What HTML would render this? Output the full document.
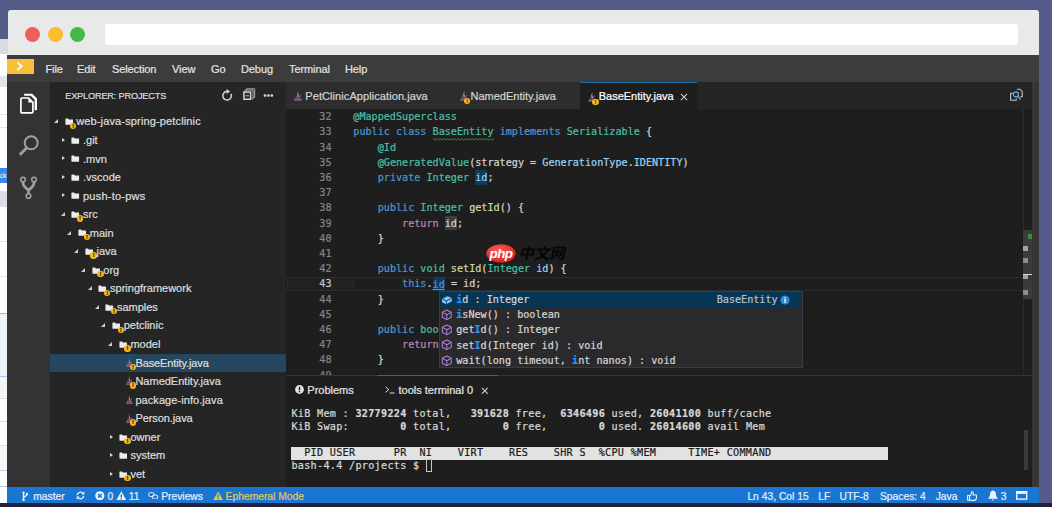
<!DOCTYPE html>
<html lang="en">
<head>
<meta charset="utf-8">
<title>Theia IDE - BaseEntity.java</title>
<style>
*{box-sizing:border-box;margin:0;padding:0}
html,body{width:1052px;height:507px;overflow:hidden}
body{position:relative;-webkit-text-stroke:0.22px;background:#545b88;font-family:"Liberation Sans","Noto Sans CJK SC",sans-serif;font-size:11px;color:#d8d8d8}
.abs{position:absolute}
/* left strip of another window */
#strip{left:0;top:0;width:8px;height:507px;overflow:hidden}
#strip div{position:absolute;left:0;width:8px}
/* window */
#win{left:7px;top:10px;width:1032px;height:493px;overflow:hidden}
#title{left:1.3px;top:0;width:1030.7px;border-radius:3px 3px 0 0;height:45px;background:#e8e9e9}
.tl{position:absolute;top:16.9px;width:15px;height:15px;border-radius:50%}
#addr{left:97.2px;top:14.2px;width:912.5px;height:20.6px;background:#fff;border-radius:3px}
#menu{left:0;top:45px;width:1032px;height:27px;background:#3c3c3c}
#menu span{position:absolute;top:8px;font-size:11px;color:#e2e2e2;letter-spacing:-0.1px}
#ybox{left:0;top:49.4px;width:27px;height:14.6px;background:#f9bf3b}
#act{left:0;top:72px;width:43px;height:405px;background:#333333}
#side{left:43px;top:72px;width:236px;height:405px;background:#252526;overflow:hidden}
#shead{position:absolute;left:15.2px;top:8.6px;font-size:9.2px;color:#dadada;letter-spacing:-0.18px}
.row{position:absolute;left:0;width:236px;height:18.55px;line-height:18.55px;font-size:11px;color:#dedede;white-space:nowrap}
.row.sel{background:#24465f}
.row>*{position:absolute;top:0}
.acl{top:6.9px!important;border-left:3.8px solid #d4d4d4;border-top:2.9px solid transparent;border-bottom:2.9px solid transparent}
.aop{top:6.9px!important;border-bottom:4.3px solid #d0d0d0;border-left:4.2px solid transparent}
.ic{width:11px;height:18.55px}
.fi{position:absolute;left:0;top:5.8px;width:8.5px;height:7.2px}
.ji{position:absolute;left:0;top:4.4px;width:6.8px;height:9.2px}
.wd{top:10.2px!important;width:6.4px;height:6.4px;border-radius:50%;background:#f5b820;color:#3a2400;font-size:5.8px;line-height:6.4px;text-align:center;font-weight:bold}
/* editor */
#tabs{left:279px;top:72px;width:746px;height:27px;background:#252526}
.tab{position:absolute;top:0;height:27px;background:#2d2d2d;font-size:11px;line-height:27px;color:#d4d4d4;white-space:nowrap}
.tab .tt{position:absolute;top:0.7px}
.wd2{position:absolute;top:15.6px;width:6.4px;height:6.4px;border-radius:50%;background:#f5b820;color:#6a4008;font-size:5.5px;line-height:6.4px;text-align:center;font-weight:bold}
.tab.act{background:#1e1e1e;border-top:1px solid #1b6fa8;line-height:25px;color:#fff}
#ed{left:279px;top:99px;width:746px;height:266px;background:#1e1e1e;overflow:hidden;font-family:"DejaVu Sans Mono","Liberation Mono",monospace;font-size:10.15px}
.ln{position:absolute;left:0;width:45.5px;text-align:right;height:15.17px;line-height:15.17px;color:#858585}
.ln.cur{color:#c6c6c6}
.cl{position:absolute;left:67.3px;height:15.17px;line-height:15.17px;white-space:pre;color:#d4d4d4}
.k{color:#5194cd}.t{color:#4abea6}.v{color:#96d2f4}.f{color:#d6d6a6}.c{color:#bf83ba}
.hl{background:#0e3a5c;padding:1.6px 0}.hl2{background:#3a3d41;padding:1.6px 0}
.u{text-decoration:underline;text-decoration-color:#4f94d0;text-decoration-thickness:0.8px;text-underline-offset:1.5px;color:#4f94d0!important}
.sq{}
/* right strip */
#rstrip{left:1025px;top:72px;width:7px;height:405px;background:#363636}
/* panel */
#panel{left:279px;top:365px;width:746px;height:112px;background:#1e1e1e;overflow:hidden}
#term{position:absolute;left:5.4px;top:33.3px;font-family:"DejaVu Sans Mono","Liberation Mono",monospace;font-size:10.15px;letter-spacing:0.305px;line-height:12.85px;white-space:pre;color:#d8d8d8}
#term .hd{display:inline-block;width:597px;background:#e2e2e2;color:#1c1c1c;height:12.4px;line-height:12.4px;vertical-align:top;margin-top:0.3px}
#term .cur{display:inline-block;width:6.2px;height:12.2px;border:1px solid #c8c8c8;vertical-align:top;margin-top:-0.2px}
/* popup */
#pop{left:432.2px;top:281.4px;width:363.6px;height:76.6px;background:#2a2a2d;border:0.8px solid #3c3c3e;font-family:"DejaVu Sans Mono","Liberation Mono",monospace;font-size:10.15px;color:#d4d4d4;overflow:hidden}
.pr{position:absolute;left:0;width:363px;height:15.17px;line-height:15.17px;white-space:pre}
.pr.s{background:#073655}
.pr span.tx{position:absolute;left:16px;top:-0.4px}
.pr b{color:#1a9cff;font-weight:bold}
.pr svg{position:absolute;left:0.8px;top:1.5px;width:11.6px;height:11.6px}
/* panel tabs */
#ptabs{position:absolute;left:0;top:0;width:746px;height:27px;border-top:1px solid #333;font-size:11px;color:#e4e4e4}
#ptabs span{position:absolute;top:7.7px;white-space:nowrap}
/* watermark */
#wm{left:478.5px;top:234px;width:90px;height:19px}
/* status */
#status{left:0;top:477px;width:1032px;height:16px;background:#1976d2;font-size:10.3px;line-height:16px;color:#e6eefa}
#status span{position:absolute;top:2.1px;white-space:nowrap}
#bot{left:0;top:503px;width:1052px;height:4px;background:#20233a}
</style>
</head>
<body>
<div id="strip" class="abs">
<div style="top:0;height:39px;background:#545b88"></div>
<div style="top:39px;height:15px;background:#d9dbe1"></div>
<div style="top:54px;height:22px;background:#fff"></div>
<div style="top:76px;height:11px;background:#e4e5ea"></div>
<div style="top:87px;height:420px;background:#fff"></div>
<div style="top:114px;height:1px;background:#e4e4e8"></div>
<div style="top:127px;height:1px;background:#e4e4e8"></div>
<div style="top:168px;height:14.6px;background:#3d8ae6;color:#fff;font-size:6.5px;line-height:15px;text-indent:-3.6px;-webkit-text-stroke:0">ack</div>
<div style="top:191px;height:16px;background:#dddee3"></div>
<div style="top:241px;height:1px;background:#e4e4e8"></div>
<div style="top:276px;height:1px;background:#e4e4e8"></div>
<div style="top:313px;height:63px;background:#eef3fb"></div>
<div style="top:312.5px;height:1px;background:#8ab8ea"></div>
<div style="top:376px;height:1px;background:#a8c8ee"></div>
<div style="top:377px;height:21px;background:#f5f5f7"></div>
<div style="top:398px;height:1px;background:#d8e0ee"></div>
<div style="top:421px;height:1px;background:#dcdce2"></div>
<div style="top:445px;height:1px;background:#dcdce2"></div>
<div style="top:446px;height:24px;background:#f7f7f9"></div>
<div style="top:470px;height:1px;background:#b8d0ee"></div>
<div style="top:485.5px;height:1px;background:#a8c8ee"></div>
</div>
<div id="win" class="abs">
 <div id="title" class="abs">
  <div class="tl" style="left:16.9px;background:#ee5f5b"></div>
  <div class="tl" style="left:39.5px;background:#fbbc2e"></div>
  <div class="tl" style="left:61.9px;background:#45b948"></div>
  <div id="addr" class="abs"></div>
 </div>
 <div id="menu" class="abs">
  <span style="left:38.5px">File</span><span style="left:70px">Edit</span><span style="left:105px">Selection</span><span style="left:165px">View</span><span style="left:204px">Go</span><span style="left:234px">Debug</span><span style="left:282px">Terminal</span><span style="left:338px">Help</span>
 </div>
 <div id="ybox" class="abs"><svg width="26.5" height="15" viewBox="0 0 26.5 15" style="display:block"><path d="M10.4 3.4L14.6 7.2L10.4 11" fill="none" stroke="#fff" stroke-width="1.9"/></svg></div>
 <div id="act" class="abs">
  <svg class="abs" style="left:12px;top:11px" width="20" height="22" viewBox="0 0 20 22"><path d="M5.2 0.7H13.2L18 5.5V16.4Q18 17.2 17.2 17.2H15.6V6.6L11.6 2.8H5.2Q4.9 1.4 5.2 0.7Z" fill="#fff"/><path d="M3 5H9.6L13.9 9.3V18.8Q13.9 19.9 12.8 19.9H3Q1.9 19.9 1.9 18.8V6.1Q1.9 5 3 5Z" fill="#333" stroke="#fff" stroke-width="1.7"/><path d="M9.3 5.2V9.6H13.7Z" fill="#fff"/></svg>
  <svg class="abs" style="left:11px;top:52.6px" width="22" height="22" viewBox="0 0 22 22"><circle cx="13.2" cy="7.8" r="6.5" fill="none" stroke="#a0a0a0" stroke-width="2"/><path d="M9.4 12.2L1.8 19.8" stroke="#a0a0a0" stroke-width="2.9" fill="none"/></svg>
  <svg class="abs" style="left:12px;top:93.8px" width="20" height="25" viewBox="0 0 20 25"><g fill="none" stroke="#a0a0a0" stroke-width="1.6"><circle cx="4" cy="3.6" r="2.3"/><circle cx="15" cy="3.6" r="2.3"/><circle cx="9.5" cy="20" r="2.3"/><path d="M4 6V7Q4 9.4 6.4 11.4L9.5 14.2V17.6M15 6V7Q15 9.4 12.6 11.4L9.5 14.2" stroke-width="2.7"/></g></svg>
 </div>
 <div id="side" class="abs">
  <div id="shead">EXPLORER: PROJECTS</div>
  <svg class="abs" style="left:169px;top:6px" width="60" height="15" viewBox="0 0 60 15"><path d="M12 5.9A4.3 4.3 0 1 1 8 3.4" fill="none" stroke="#cfcfcf" stroke-width="1.6"/><path d="M7.6 0.9L11.2 3.4L7.6 5.9Z" fill="#cfcfcf"/><g fill="none" stroke="#bdbdbd" stroke-width="0.9"><path d="M27.6 2.1V0.8H35.7V9.4H34.4"/><path d="M25.9 3.4V2.1H34V10.7H32.7"/></g><rect x="24.9" y="4.1" width="6.7" height="7.2" fill="#252526" stroke="#d2d2d2" stroke-width="1.5"/><rect x="26.4" y="6.9" width="3.7" height="1.5" fill="#4aa0ea"/><g fill="#d4d4d4"><rect x="44.7" y="6.2" width="2.6" height="2.6" rx="0.8"/><rect x="48.1" y="6.2" width="2.6" height="2.6" rx="0.8"/><rect x="51.5" y="6.2" width="2.6" height="2.6" rx="0.8"/></g></svg>
<div class="row" style="top:30.40px"><i class="aop" style="left:3.90px"></i><span class="ic" style="left:14.50px"><svg class="fi" viewBox="0 0 12 10"><path d="M0.6 1.2Q0.6 0.6 1.2 0.6H4.2L5.4 1.9H10.8Q11.4 1.9 11.4 2.5V8.8Q11.4 9.4 10.8 9.4H1.2Q0.6 9.4 0.6 8.8Z" fill="#ececec"/></svg></span><span class="wd" style="left:20.10px">!</span><span class="lb" style="left:26.20px;letter-spacing:0.144px">web-java-spring-petclinic</span></div>
<div class="row" style="top:48.95px"><i class="acl" style="left:12.48px"></i><span class="ic" style="left:21.28px"><svg class="fi" viewBox="0 0 12 10"><path d="M0.6 1.2Q0.6 0.6 1.2 0.6H4.2L5.4 1.9H10.8Q11.4 1.9 11.4 2.5V8.8Q11.4 9.4 10.8 9.4H1.2Q0.6 9.4 0.6 8.8Z" fill="#ececec"/></svg></span><span class="lb" style="left:32.98px">.git</span></div>
<div class="row" style="top:67.50px"><i class="acl" style="left:12.48px"></i><span class="ic" style="left:21.28px"><svg class="fi" viewBox="0 0 12 10"><path d="M0.6 1.2Q0.6 0.6 1.2 0.6H4.2L5.4 1.9H10.8Q11.4 1.9 11.4 2.5V8.8Q11.4 9.4 10.8 9.4H1.2Q0.6 9.4 0.6 8.8Z" fill="#ececec"/></svg></span><span class="lb" style="left:32.98px">.mvn</span></div>
<div class="row" style="top:86.05px"><i class="acl" style="left:12.48px"></i><span class="ic" style="left:21.28px"><svg class="fi" viewBox="0 0 12 10"><path d="M0.6 1.2Q0.6 0.6 1.2 0.6H4.2L5.4 1.9H10.8Q11.4 1.9 11.4 2.5V8.8Q11.4 9.4 10.8 9.4H1.2Q0.6 9.4 0.6 8.8Z" fill="#ececec"/></svg></span><span class="lb" style="left:32.98px">.vscode</span></div>
<div class="row" style="top:104.60px"><i class="acl" style="left:12.48px"></i><span class="ic" style="left:21.28px"><svg class="fi" viewBox="0 0 12 10"><path d="M0.6 1.2Q0.6 0.6 1.2 0.6H4.2L5.4 1.9H10.8Q11.4 1.9 11.4 2.5V8.8Q11.4 9.4 10.8 9.4H1.2Q0.6 9.4 0.6 8.8Z" fill="#ececec"/></svg></span><span class="lb" style="left:32.98px;letter-spacing:0.24px">push-to-pws</span></div>
<div class="row" style="top:123.15px"><i class="aop" style="left:10.68px"></i><span class="ic" style="left:21.28px"><svg class="fi" viewBox="0 0 12 10"><path d="M0.6 1.2Q0.6 0.6 1.2 0.6H4.2L5.4 1.9H10.8Q11.4 1.9 11.4 2.5V8.8Q11.4 9.4 10.8 9.4H1.2Q0.6 9.4 0.6 8.8Z" fill="#ececec"/></svg></span><span class="wd" style="left:26.88px">!</span><span class="lb" style="left:32.98px">src</span></div>
<div class="row" style="top:141.70px"><i class="aop" style="left:17.46px"></i><span class="ic" style="left:28.06px"><svg class="fi" viewBox="0 0 12 10"><path d="M0.6 1.2Q0.6 0.6 1.2 0.6H4.2L5.4 1.9H10.8Q11.4 1.9 11.4 2.5V8.8Q11.4 9.4 10.8 9.4H1.2Q0.6 9.4 0.6 8.8Z" fill="#ececec"/></svg></span><span class="wd" style="left:33.66px">!</span><span class="lb" style="left:39.76px">main</span></div>
<div class="row" style="top:160.25px"><i class="aop" style="left:24.24px"></i><span class="ic" style="left:34.84px"><svg class="fi" viewBox="0 0 12 10"><path d="M0.6 1.2Q0.6 0.6 1.2 0.6H4.2L5.4 1.9H10.8Q11.4 1.9 11.4 2.5V8.8Q11.4 9.4 10.8 9.4H1.2Q0.6 9.4 0.6 8.8Z" fill="#ececec"/></svg></span><span class="wd" style="left:40.44px">!</span><span class="lb" style="left:46.54px">java</span></div>
<div class="row" style="top:178.80px"><i class="aop" style="left:31.02px"></i><span class="ic" style="left:41.62px"><svg class="fi" viewBox="0 0 12 10"><path d="M0.6 1.2Q0.6 0.6 1.2 0.6H4.2L5.4 1.9H10.8Q11.4 1.9 11.4 2.5V8.8Q11.4 9.4 10.8 9.4H1.2Q0.6 9.4 0.6 8.8Z" fill="#ececec"/></svg></span><span class="wd" style="left:47.22px">!</span><span class="lb" style="left:53.32px">org</span></div>
<div class="row" style="top:197.35px"><i class="aop" style="left:37.80px"></i><span class="ic" style="left:48.40px"><svg class="fi" viewBox="0 0 12 10"><path d="M0.6 1.2Q0.6 0.6 1.2 0.6H4.2L5.4 1.9H10.8Q11.4 1.9 11.4 2.5V8.8Q11.4 9.4 10.8 9.4H1.2Q0.6 9.4 0.6 8.8Z" fill="#ececec"/></svg></span><span class="wd" style="left:54.00px">!</span><span class="lb" style="left:60.10px">springframework</span></div>
<div class="row" style="top:215.90px"><i class="aop" style="left:44.58px"></i><span class="ic" style="left:55.18px"><svg class="fi" viewBox="0 0 12 10"><path d="M0.6 1.2Q0.6 0.6 1.2 0.6H4.2L5.4 1.9H10.8Q11.4 1.9 11.4 2.5V8.8Q11.4 9.4 10.8 9.4H1.2Q0.6 9.4 0.6 8.8Z" fill="#ececec"/></svg></span><span class="wd" style="left:60.78px">!</span><span class="lb" style="left:66.88px">samples</span></div>
<div class="row" style="top:234.45px"><i class="aop" style="left:51.36px"></i><span class="ic" style="left:61.96px"><svg class="fi" viewBox="0 0 12 10"><path d="M0.6 1.2Q0.6 0.6 1.2 0.6H4.2L5.4 1.9H10.8Q11.4 1.9 11.4 2.5V8.8Q11.4 9.4 10.8 9.4H1.2Q0.6 9.4 0.6 8.8Z" fill="#ececec"/></svg></span><span class="wd" style="left:67.56px">!</span><span class="lb" style="left:73.66px">petclinic</span></div>
<div class="row" style="top:253.00px"><i class="aop" style="left:58.14px"></i><span class="ic" style="left:68.74px"><svg class="fi" viewBox="0 0 12 10"><path d="M0.6 1.2Q0.6 0.6 1.2 0.6H4.2L5.4 1.9H10.8Q11.4 1.9 11.4 2.5V8.8Q11.4 9.4 10.8 9.4H1.2Q0.6 9.4 0.6 8.8Z" fill="#ececec"/></svg></span><span class="wd" style="left:74.34px">!</span><span class="lb" style="left:80.44px">model</span></div>
<div class="row sel" style="top:271.55px"><span class="ic" style="left:75.92px"><svg class="ji" viewBox="0 0 7 9"><path d="M3.9 0C4.7 1.3 3.4 2 3.9 3.1C4.3 3.9 5.1 4.4 4.5 5.7H2.9C3.3 4.9 2.5 4.3 2.6 3.2C2.7 2 3.8 1.4 3.9 0ZM5.5 2.6C6.1 3.6 5.5 4.4 5.6 5.7H4.9C5 4.4 5.3 3.8 5.5 2.6ZM1.6 4.2C1.4 4.8 1.9 5.2 1.9 5.7H2.5C2.3 5.1 1.9 4.8 1.6 4.2ZM1 6.1H6V7H1ZM0.2 7.6H6.8V8.8H0.2Z" fill="#a870a2"/></svg></span><span class="wd" style="left:79.72px">!</span><span class="lb" style="left:85.42px;letter-spacing:-0.11px">BaseEntity.java</span></div>
<div class="row" style="top:290.10px"><span class="ic" style="left:75.92px"><svg class="ji" viewBox="0 0 7 9"><path d="M3.9 0C4.7 1.3 3.4 2 3.9 3.1C4.3 3.9 5.1 4.4 4.5 5.7H2.9C3.3 4.9 2.5 4.3 2.6 3.2C2.7 2 3.8 1.4 3.9 0ZM5.5 2.6C6.1 3.6 5.5 4.4 5.6 5.7H4.9C5 4.4 5.3 3.8 5.5 2.6ZM1.6 4.2C1.4 4.8 1.9 5.2 1.9 5.7H2.5C2.3 5.1 1.9 4.8 1.6 4.2ZM1 6.1H6V7H1ZM0.2 7.6H6.8V8.8H0.2Z" fill="#a870a2"/></svg></span><span class="wd" style="left:79.72px">!</span><span class="lb" style="left:85.42px">NamedEntity.java</span></div>
<div class="row" style="top:308.65px"><span class="ic" style="left:75.92px"><svg class="ji" viewBox="0 0 7 9"><path d="M3.9 0C4.7 1.3 3.4 2 3.9 3.1C4.3 3.9 5.1 4.4 4.5 5.7H2.9C3.3 4.9 2.5 4.3 2.6 3.2C2.7 2 3.8 1.4 3.9 0ZM5.5 2.6C6.1 3.6 5.5 4.4 5.6 5.7H4.9C5 4.4 5.3 3.8 5.5 2.6ZM1.6 4.2C1.4 4.8 1.9 5.2 1.9 5.7H2.5C2.3 5.1 1.9 4.8 1.6 4.2ZM1 6.1H6V7H1ZM0.2 7.6H6.8V8.8H0.2Z" fill="#a870a2"/></svg></span><span class="lb" style="left:85.42px;letter-spacing:0.07px">package-info.java</span></div>
<div class="row" style="top:327.20px"><span class="ic" style="left:75.92px"><svg class="ji" viewBox="0 0 7 9"><path d="M3.9 0C4.7 1.3 3.4 2 3.9 3.1C4.3 3.9 5.1 4.4 4.5 5.7H2.9C3.3 4.9 2.5 4.3 2.6 3.2C2.7 2 3.8 1.4 3.9 0ZM5.5 2.6C6.1 3.6 5.5 4.4 5.6 5.7H4.9C5 4.4 5.3 3.8 5.5 2.6ZM1.6 4.2C1.4 4.8 1.9 5.2 1.9 5.7H2.5C2.3 5.1 1.9 4.8 1.6 4.2ZM1 6.1H6V7H1ZM0.2 7.6H6.8V8.8H0.2Z" fill="#a870a2"/></svg></span><span class="wd" style="left:79.72px">!</span><span class="lb" style="left:85.42px;letter-spacing:-0.08px">Person.java</span></div>
<div class="row" style="top:345.75px"><i class="acl" style="left:59.94px"></i><span class="ic" style="left:68.74px"><svg class="fi" viewBox="0 0 12 10"><path d="M0.6 1.2Q0.6 0.6 1.2 0.6H4.2L5.4 1.9H10.8Q11.4 1.9 11.4 2.5V8.8Q11.4 9.4 10.8 9.4H1.2Q0.6 9.4 0.6 8.8Z" fill="#ececec"/></svg></span><span class="wd" style="left:74.34px">!</span><span class="lb" style="left:80.44px">owner</span></div>
<div class="row" style="top:364.30px"><i class="acl" style="left:59.94px"></i><span class="ic" style="left:68.74px"><svg class="fi" viewBox="0 0 12 10"><path d="M0.6 1.2Q0.6 0.6 1.2 0.6H4.2L5.4 1.9H10.8Q11.4 1.9 11.4 2.5V8.8Q11.4 9.4 10.8 9.4H1.2Q0.6 9.4 0.6 8.8Z" fill="#ececec"/></svg></span><span class="lb" style="left:80.44px">system</span></div>
<div class="row" style="top:382.85px"><i class="acl" style="left:59.94px"></i><span class="ic" style="left:68.74px"><svg class="fi" viewBox="0 0 12 10"><path d="M0.6 1.2Q0.6 0.6 1.2 0.6H4.2L5.4 1.9H10.8Q11.4 1.9 11.4 2.5V8.8Q11.4 9.4 10.8 9.4H1.2Q0.6 9.4 0.6 8.8Z" fill="#ececec"/></svg></span><span class="wd" style="left:74.34px">!</span><span class="lb" style="left:80.44px">vet</span></div>
 </div>
 <div id="tabs" class="abs">
  <div class="tab" style="left:0;width:157px"><svg style="position:absolute;left:7.9px;top:9.2px" width="7.8" height="9.8" viewBox="0 0 7 9" preserveAspectRatio="none"><path d="M3.9 0C4.7 1.3 3.4 2 3.9 3.1C4.3 3.9 5.1 4.4 4.5 5.7H2.9C3.3 4.9 2.5 4.3 2.6 3.2C2.7 2 3.8 1.4 3.9 0ZM5.5 2.6C6.1 3.6 5.5 4.4 5.6 5.7H4.9C5 4.4 5.3 3.8 5.5 2.6ZM1.6 4.2C1.4 4.8 1.9 5.2 1.9 5.7H2.5C2.3 5.1 1.9 4.8 1.6 4.2ZM1 6.1H6V7H1ZM0.2 7.6H6.8V8.8H0.2Z" fill="#a870a2"/></svg><span class="tt" style="left:19.3px;letter-spacing:0.08px">PetClinicApplication.java</span></div>
  <div class="tab" style="left:157px;width:137px"><svg style="position:absolute;left:17.0px;top:9.2px" width="7.8" height="9.8" viewBox="0 0 7 9" preserveAspectRatio="none"><path d="M3.9 0C4.7 1.3 3.4 2 3.9 3.1C4.3 3.9 5.1 4.4 4.5 5.7H2.9C3.3 4.9 2.5 4.3 2.6 3.2C2.7 2 3.8 1.4 3.9 0ZM5.5 2.6C6.1 3.6 5.5 4.4 5.6 5.7H4.9C5 4.4 5.3 3.8 5.5 2.6ZM1.6 4.2C1.4 4.8 1.9 5.2 1.9 5.7H2.5C2.3 5.1 1.9 4.8 1.6 4.2ZM1 6.1H6V7H1ZM0.2 7.6H6.8V8.8H0.2Z" fill="#a870a2"/></svg><span class="wd2" style="left:21.0px">!</span><span class="tt" style="left:27.5px">NamedEntity.java</span></div>
  <div class="tab act" style="left:293.7px;width:117.7px"><svg style="position:absolute;left:8.1px;top:9.2px" width="7.8" height="9.8" viewBox="0 0 7 9" preserveAspectRatio="none"><path d="M3.9 0C4.7 1.3 3.4 2 3.9 3.1C4.3 3.9 5.1 4.4 4.5 5.7H2.9C3.3 4.9 2.5 4.3 2.6 3.2C2.7 2 3.8 1.4 3.9 0ZM5.5 2.6C6.1 3.6 5.5 4.4 5.6 5.7H4.9C5 4.4 5.3 3.8 5.5 2.6ZM1.6 4.2C1.4 4.8 1.9 5.2 1.9 5.7H2.5C2.3 5.1 1.9 4.8 1.6 4.2ZM1 6.1H6V7H1ZM0.2 7.6H6.8V8.8H0.2Z" fill="#a870a2"/></svg><span class="wd2" style="left:12.5px">!</span><span class="tt" style="left:19.0px">BaseEntity.java</span><svg style="position:absolute;left:100.7px;top:9.7px" width="8" height="8" viewBox="0 0 8 8"><path d="M0.9 0.9L7.1 7.1M7.1 0.9L0.9 7.1" stroke="#cccccc" stroke-width="1.1"/></svg></div>
  <svg style="position:absolute;left:723px;top:6px" width="15" height="14" viewBox="0 0 15 14"><g fill="none" stroke="#c4c4c4" stroke-width="1.1"><path d="M4.4 5.2H1.6V12.2H7.2V10.6"/><path d="M8 1.2H11L13.2 3.4V8.6H11.4"/></g><circle cx="6.9" cy="6.4" r="2.5" fill="none" stroke="#6fb2e4" stroke-width="1.2"/><path d="M8.8 8.4L11.6 11.6" stroke="#6fb2e4" stroke-width="1.3"/></svg>
 </div>
 <div id="ed" class="abs">
<div style="position:absolute;left:736.8px;top:0.0px;width:0.8px;height:266.0px;background:#2b2b2b"></div>
<div style="position:absolute;left:737.4px;top:121.3px;width:8.6px;height:68.5px;background:#3b3b3c"></div>
<div style="position:absolute;left:741.7px;top:125.4px;width:4.3px;height:4.8px;background:#3a8c3c"></div>
<div style="position:absolute;left:737.4px;top:137.2px;width:4.6px;height:5.0px;background:#ab9bab"></div>
<div style="position:absolute;left:737.4px;top:148.5px;width:4.6px;height:5.0px;background:#8c8c8c"></div>
<div style="position:absolute;left:737.4px;top:164.6px;width:8.6px;height:1.0px;background:#d8d8d8"></div>
<div style="position:absolute;left:737.4px;top:165.6px;width:4.6px;height:4.6px;background:#ab9bab"></div>
<div style="position:absolute;left:737.4px;top:180.5px;width:4.6px;height:5.0px;background:#8c8c8c"></div>
<div style="position:absolute;left:69.0px;top:168.2px;width:668.0px;height:13.4px;border-top:1px solid #2c2c2c;border-bottom:1px solid #2c2c2c"></div>
<div style="position:absolute;left:0.6px;top:168.2px;width:67.2px;height:13.4px;border:1px solid #2c2c2c;background:#212121"></div>
<svg style="position:absolute;left:147.4px;top:28.6px" width="62" height="3" viewBox="0 0 62 3"><polyline points="0.0,0.5 1.8,2.1 3.6,0.5 5.4,2.1 7.2,0.5 9.0,2.1 10.8,0.5 12.6,2.1 14.4,0.5 16.2,2.1 18.0,0.5 19.8,2.1 21.6,0.5 23.4,2.1 25.2,0.5 27.0,2.1 28.8,0.5 30.6,2.1 32.4,0.5 34.2,2.1 36.0,0.5 37.8,2.1 39.6,0.5 41.4,2.1 43.2,0.5 45.0,2.1 46.8,0.5 48.6,2.1 50.4,0.5 52.2,2.1 54.0,0.5 55.8,2.1 57.6,0.5 59.4,2.1 61.2,0.5" fill="none" stroke="#5f9a48" stroke-width="0.8"/></svg>
<div class="ln" style="top:0.25px">32</div><div class="cl" style="top:0.25px"><span class="t">@MappedSuperclass</span></div>
<div class="ln" style="top:15.45px">33</div><div class="cl" style="top:15.45px"><span class="k">public class </span><span class="t sq">BaseEntity</span> <span class="k">implements </span><span class="t">Serializable</span> {</div>
<div class="ln" style="top:30.65px">34</div><div class="cl" style="top:30.65px">    <span class="t">@Id</span></div>
<div class="ln" style="top:45.85px">35</div><div class="cl" style="top:45.85px">    <span class="t">@GeneratedValue</span>(strategy = <span class="v">GenerationType</span>.<span class="v">IDENTITY</span>)</div>
<div class="ln" style="top:61.05px">36</div><div class="cl" style="top:61.05px">    <span class="k">private </span><span class="t">Integer </span><span class="v hl">id</span>;</div>
<div class="ln" style="top:76.25px">37</div><div class="cl" style="top:76.25px"></div>
<div class="ln" style="top:91.45px">38</div><div class="cl" style="top:91.45px">    <span class="k">public </span><span class="t">Integer </span><span class="f">getId</span>() {</div>
<div class="ln" style="top:106.65px">39</div><div class="cl" style="top:106.65px">        <span class="c">return </span><span class="hl2">id</span>;</div>
<div class="ln" style="top:121.85px">40</div><div class="cl" style="top:121.85px">    }</div>
<div class="ln" style="top:137.05px">41</div><div class="cl" style="top:137.05px"></div>
<div class="ln" style="top:152.25px">42</div><div class="cl" style="top:152.25px">    <span class="k">public </span><span class="t">void </span><span class="f">setId</span>(<span class="t">Integer </span><span class="v">id</span>) {</div>
<div class="ln cur" style="top:167.45px">43</div><div class="cl" style="top:167.45px">        <span class="k">this</span>.<span class="v hl u">id</span> = id;</div>
<div class="ln" style="top:182.65px">44</div><div class="cl" style="top:182.65px">    }</div>
<div class="ln" style="top:197.85px">45</div><div class="cl" style="top:197.85px"></div>
<div class="ln" style="top:213.05px">46</div><div class="cl" style="top:213.05px">    <span class="k">public </span><span class="t">boolean </span><span class="f">isNew</span>() {</div>
<div class="ln" style="top:228.25px">47</div><div class="cl" style="top:228.25px">        <span class="c">return </span><span class="k">this</span>.id == <span class="k">null</span>;</div>
<div class="ln" style="top:243.45px">48</div><div class="cl" style="top:243.45px">    }</div>
<div class="ln" style="top:258.65px">49</div><div class="cl" style="top:258.65px"></div>
 </div>
<div id="pop" class="abs">
  <div class="pr s" style="top:0"><svg viewBox="0 0 12 12"><path d="M1 5.2L6.6 2.2L11.2 4.2V7.6L5.6 10.6L1 8.6Z" fill="#86c6ff"/><path d="M1.4 5.4L5.7 7.2L10.8 4.5" fill="none" stroke="#073655" stroke-width="0.9"/><path d="M5.7 7.2V10.2" stroke="#073655" stroke-width="0.9"/></svg><span class="tx"><b>i</b>d : Integer</span><span style="position:absolute;left:276.5px;top:0;color:#b4c0c8">BaseEntity</span><svg style="left:339.5px;top:2.6px;width:10px;height:10px" viewBox="0 0 10 10"><circle cx="5" cy="5" r="4.6" fill="#2e8ad0"/><rect x="4.3" y="4" width="1.4" height="3.8" fill="#fff"/><rect x="4.3" y="2" width="1.4" height="1.3" fill="#fff"/></svg></div>
  <div class="pr" style="top:15.17px"><svg viewBox="0 0 12 12"><g fill="none" stroke="#b180d7" stroke-width="1.05" stroke-linejoin="round"><path d="M6 1L10.6 3.4V8.6L6 11L1.4 8.6V3.4Z"/><path d="M1.6 3.5L6 5.9L10.4 3.5M6 5.9V10.8"/></g></svg><span class="tx"><b>i</b>sNew() : boolean</span></div>
  <div class="pr" style="top:30.34px"><svg viewBox="0 0 12 12"><g fill="none" stroke="#b180d7" stroke-width="1.05" stroke-linejoin="round"><path d="M6 1L10.6 3.4V8.6L6 11L1.4 8.6V3.4Z"/><path d="M1.6 3.5L6 5.9L10.4 3.5M6 5.9V10.8"/></g></svg><span class="tx">get<b>I</b>d() : Integer</span></div>
  <div class="pr" style="top:45.51px"><svg viewBox="0 0 12 12"><g fill="none" stroke="#b180d7" stroke-width="1.05" stroke-linejoin="round"><path d="M6 1L10.6 3.4V8.6L6 11L1.4 8.6V3.4Z"/><path d="M1.6 3.5L6 5.9L10.4 3.5M6 5.9V10.8"/></g></svg><span class="tx">set<b>I</b>d(Integer id) : void</span></div>
  <div class="pr" style="top:60.68px"><svg viewBox="0 0 12 12"><g fill="none" stroke="#b180d7" stroke-width="1.05" stroke-linejoin="round"><path d="M6 1L10.6 3.4V8.6L6 11L1.4 8.6V3.4Z"/><path d="M1.6 3.5L6 5.9L10.4 3.5M6 5.9V10.8"/></g></svg><span class="tx">wait(long timeout, <b>i</b>nt nanos) : void</span></div>
 </div>
 <div id="wm" class="abs"><svg width="90" height="19" viewBox="0 0 90 19" style="display:block"><defs><radialGradient id="rg" cx="0.4" cy="0.3" r="0.8"><stop offset="0" stop-color="#ff5a50"/><stop offset="1" stop-color="#d81818"/></radialGradient></defs><ellipse cx="15" cy="9.5" rx="14.6" ry="9.3" fill="url(#rg)"/><text x="15" y="13.6" text-anchor="middle" font-family="Liberation Sans, sans-serif" font-style="italic" font-weight="bold" font-size="13.5" fill="#fff" letter-spacing="-0.6">php</text><text x="32.5" y="14.6" font-family="Noto Sans CJK SC, sans-serif" font-size="15.5" font-weight="bold" fill="#050505" transform="skewX(-12) translate(3.2 0)">中文网</text></svg></div>
 <div id="rstrip" class="abs"></div>
 <div id="panel" class="abs">
  <div id="ptabs">
   <div style="position:absolute;left:91px;top:-1px;width:120.5px;height:1px;background:#5a5a5a"></div>
   <svg style="position:absolute;left:8.5px;top:9.2px" width="9" height="9" viewBox="0 0 9 9"><circle cx="4.5" cy="4.5" r="4.4" fill="#e4e4e4"/><rect x="3.8" y="1.8" width="1.4" height="3.5" fill="#1e1e1e"/><rect x="3.8" y="6" width="1.4" height="1.3" fill="#1e1e1e"/></svg>
   <span style="left:21.3px">Problems</span>
   <svg style="position:absolute;left:99px;top:10px" width="11" height="8" viewBox="0 0 11 8"><path d="M0.6 0.8L3.8 3.6L0.6 6.4" fill="none" stroke="#e4e4e4" stroke-width="1"/><path d="M4.8 7H9.6" stroke="#e4e4e4" stroke-width="1"/></svg>
   <span style="left:112.5px">tools terminal 0</span>
   <svg style="position:absolute;left:195.2px;top:10.5px" width="7.6" height="7.6" viewBox="0 0 8 8"><path d="M0.9 0.9L7.1 7.1M7.1 0.9L0.9 7.1" stroke="#cccccc" stroke-width="1.1"/></svg>
  </div>
  <div style="position:absolute;left:738.4px;top:55.4px;width:3.8px;height:40px;background:#3a3a3a"></div>
  <div id="term">KiB Mem : <b>32779224</b> total,   <b>391628</b> free,  <b>6346496</b> used, <b>26041100</b> buff/cache
KiB Swap:        <b>0</b> total,        <b>0</b> free,        <b>0</b> used. <b>26014600</b> avail Mem

<span class="hd">  PID USER      PR  NI    VIRT    RES    SHR S  %CPU %MEM     TIME+ COMMAND</span>
bash-4.4 /projects $ <span class="cur"></span></div>
 </div>
 <div id="status" class="abs">
  <svg style="position:absolute;left:14.6px;top:3.5px" width="6.6" height="10.4" viewBox="0 0 6 10"><g fill="none" stroke="#eef3fb" stroke-width="1.4"><path d="M1.3 1.6V8.4"/><path d="M4.6 3.2C4.6 5.4 1.3 4.8 1.3 6.8"/></g><circle cx="1.3" cy="1.5" r="1.1" fill="#eef3fb"/><circle cx="1.3" cy="8.6" r="1.1" fill="#eef3fb"/><circle cx="4.6" cy="2.8" r="1.1" fill="#eef3fb"/></svg>
  <span style="left:26.2px">master</span>
  <svg style="position:absolute;left:68.6px;top:4.1px" width="9" height="9" viewBox="0 0 9 9"><g fill="none" stroke="#eef3fb" stroke-width="1.3"><path d="M1.2 4.2A3.3 3.3 0 0 1 7.2 2.6"/><path d="M7.8 4.8A3.3 3.3 0 0 1 1.8 6.4"/></g><path d="M8.4 0.6V3.6H5.4Z" fill="#eef3fb"/><path d="M0.6 8.4V5.4H3.6Z" fill="#eef3fb"/></svg>
  <svg style="position:absolute;left:88.4px;top:3.8px" width="9.6" height="9.6" viewBox="0 0 10 10"><circle cx="5" cy="5" r="4.8" fill="#eef3fb"/><path d="M3.1 3.1L6.9 6.9M6.9 3.1L3.1 6.9" stroke="#1976d2" stroke-width="1.5"/></svg>
  <span style="left:100.6px">0</span>
  <svg style="position:absolute;left:108.6px;top:3.5px" width="10.6" height="9.8" viewBox="0 0 11 10"><path d="M5.5 0.3L10.8 9.7H0.2Z" fill="#eef3fb"/><rect x="4.8" y="3.4" width="1.4" height="3.4" fill="#1976d2"/><rect x="4.8" y="7.5" width="1.4" height="1.3" fill="#1976d2"/></svg>
  <span style="left:121.8px">11</span>
  <svg style="position:absolute;left:141.4px;top:4.7px" width="10.4" height="7.6" viewBox="0 0 10.4 7.6"><g fill="none" stroke="#eef3fb" stroke-width="1"><rect x="0.6" y="0.6" width="5.6" height="4" rx="2"/><rect x="4.2" y="3" width="5.6" height="4" rx="2"/></g></svg>
  <span style="left:154.2px">Previews</span>
  <svg style="position:absolute;left:205.6px;top:3.5px" width="10.2" height="9.6" viewBox="0 0 11 10"><path d="M5.5 0.3L10.8 9.7H0.2Z" fill="#f2c440"/><rect x="4.8" y="3.4" width="1.4" height="3.4" fill="#1976d2"/><rect x="4.8" y="7.5" width="1.4" height="1.3" fill="#1976d2"/></svg>
  <span style="left:218.6px;color:#e6c558">Ephemeral Mode</span>
  <span style="left:740.4px">Ln 43, Col 15</span><span style="left:811.2px">LF</span><span style="left:832.6px">UTF-8</span><span style="left:873.0px">Spaces: 4</span><span style="left:928.7px">Java</span>
  <svg style="position:absolute;left:960.0px;top:3.5px" width="10.4" height="10" viewBox="0 0 10.4 10"><g fill="none" stroke="#eef3fb" stroke-width="1.05" stroke-linejoin="round"><rect x="0.6" y="4.6" width="2" height="4.6"/><path d="M2.6 5C4 4.2 4.6 3 4.8 0.8C6.2 0.6 6.6 2.2 6 4H9C10 4 10 5 9.4 5.4C10 6 9.8 6.8 9.2 7C9.6 7.8 9.2 8.4 8.6 8.4C8.8 9.2 8.2 9.4 7.6 9.4H4.6L2.6 8.8"/></g></svg>
  <svg style="position:absolute;left:980.6px;top:3.3px" width="10" height="10.6" viewBox="0 0 10 10.6"><path d="M5 0.4C7.4 0.6 8 2.6 8 4.6C8 6.6 8.8 7.4 9.8 8.2V8.8H0.2V8.2C1.2 7.4 2 6.6 2 4.6C2 2.6 2.6 0.6 5 0.4Z" fill="#eef3fb"/><path d="M3.8 9.4H6.2C6.2 10.2 5.6 10.5 5 10.5C4.4 10.5 3.8 10.2 3.8 9.4Z" fill="#eef3fb"/></svg>
  <span style="left:993.8px">3</span>
  <svg style="position:absolute;left:1009.2px;top:4.1px" width="11.4" height="8.8" viewBox="0 0 11.4 8.8"><rect x="0.7" y="0.7" width="10" height="7.4" fill="none" stroke="#eef3fb" stroke-width="1.4"/><rect x="0.7" y="0.7" width="10" height="2.2" fill="#eef3fb"/></svg>
 </div>
</div>
<div id="bot" class="abs"></div>
</body>
</html>
